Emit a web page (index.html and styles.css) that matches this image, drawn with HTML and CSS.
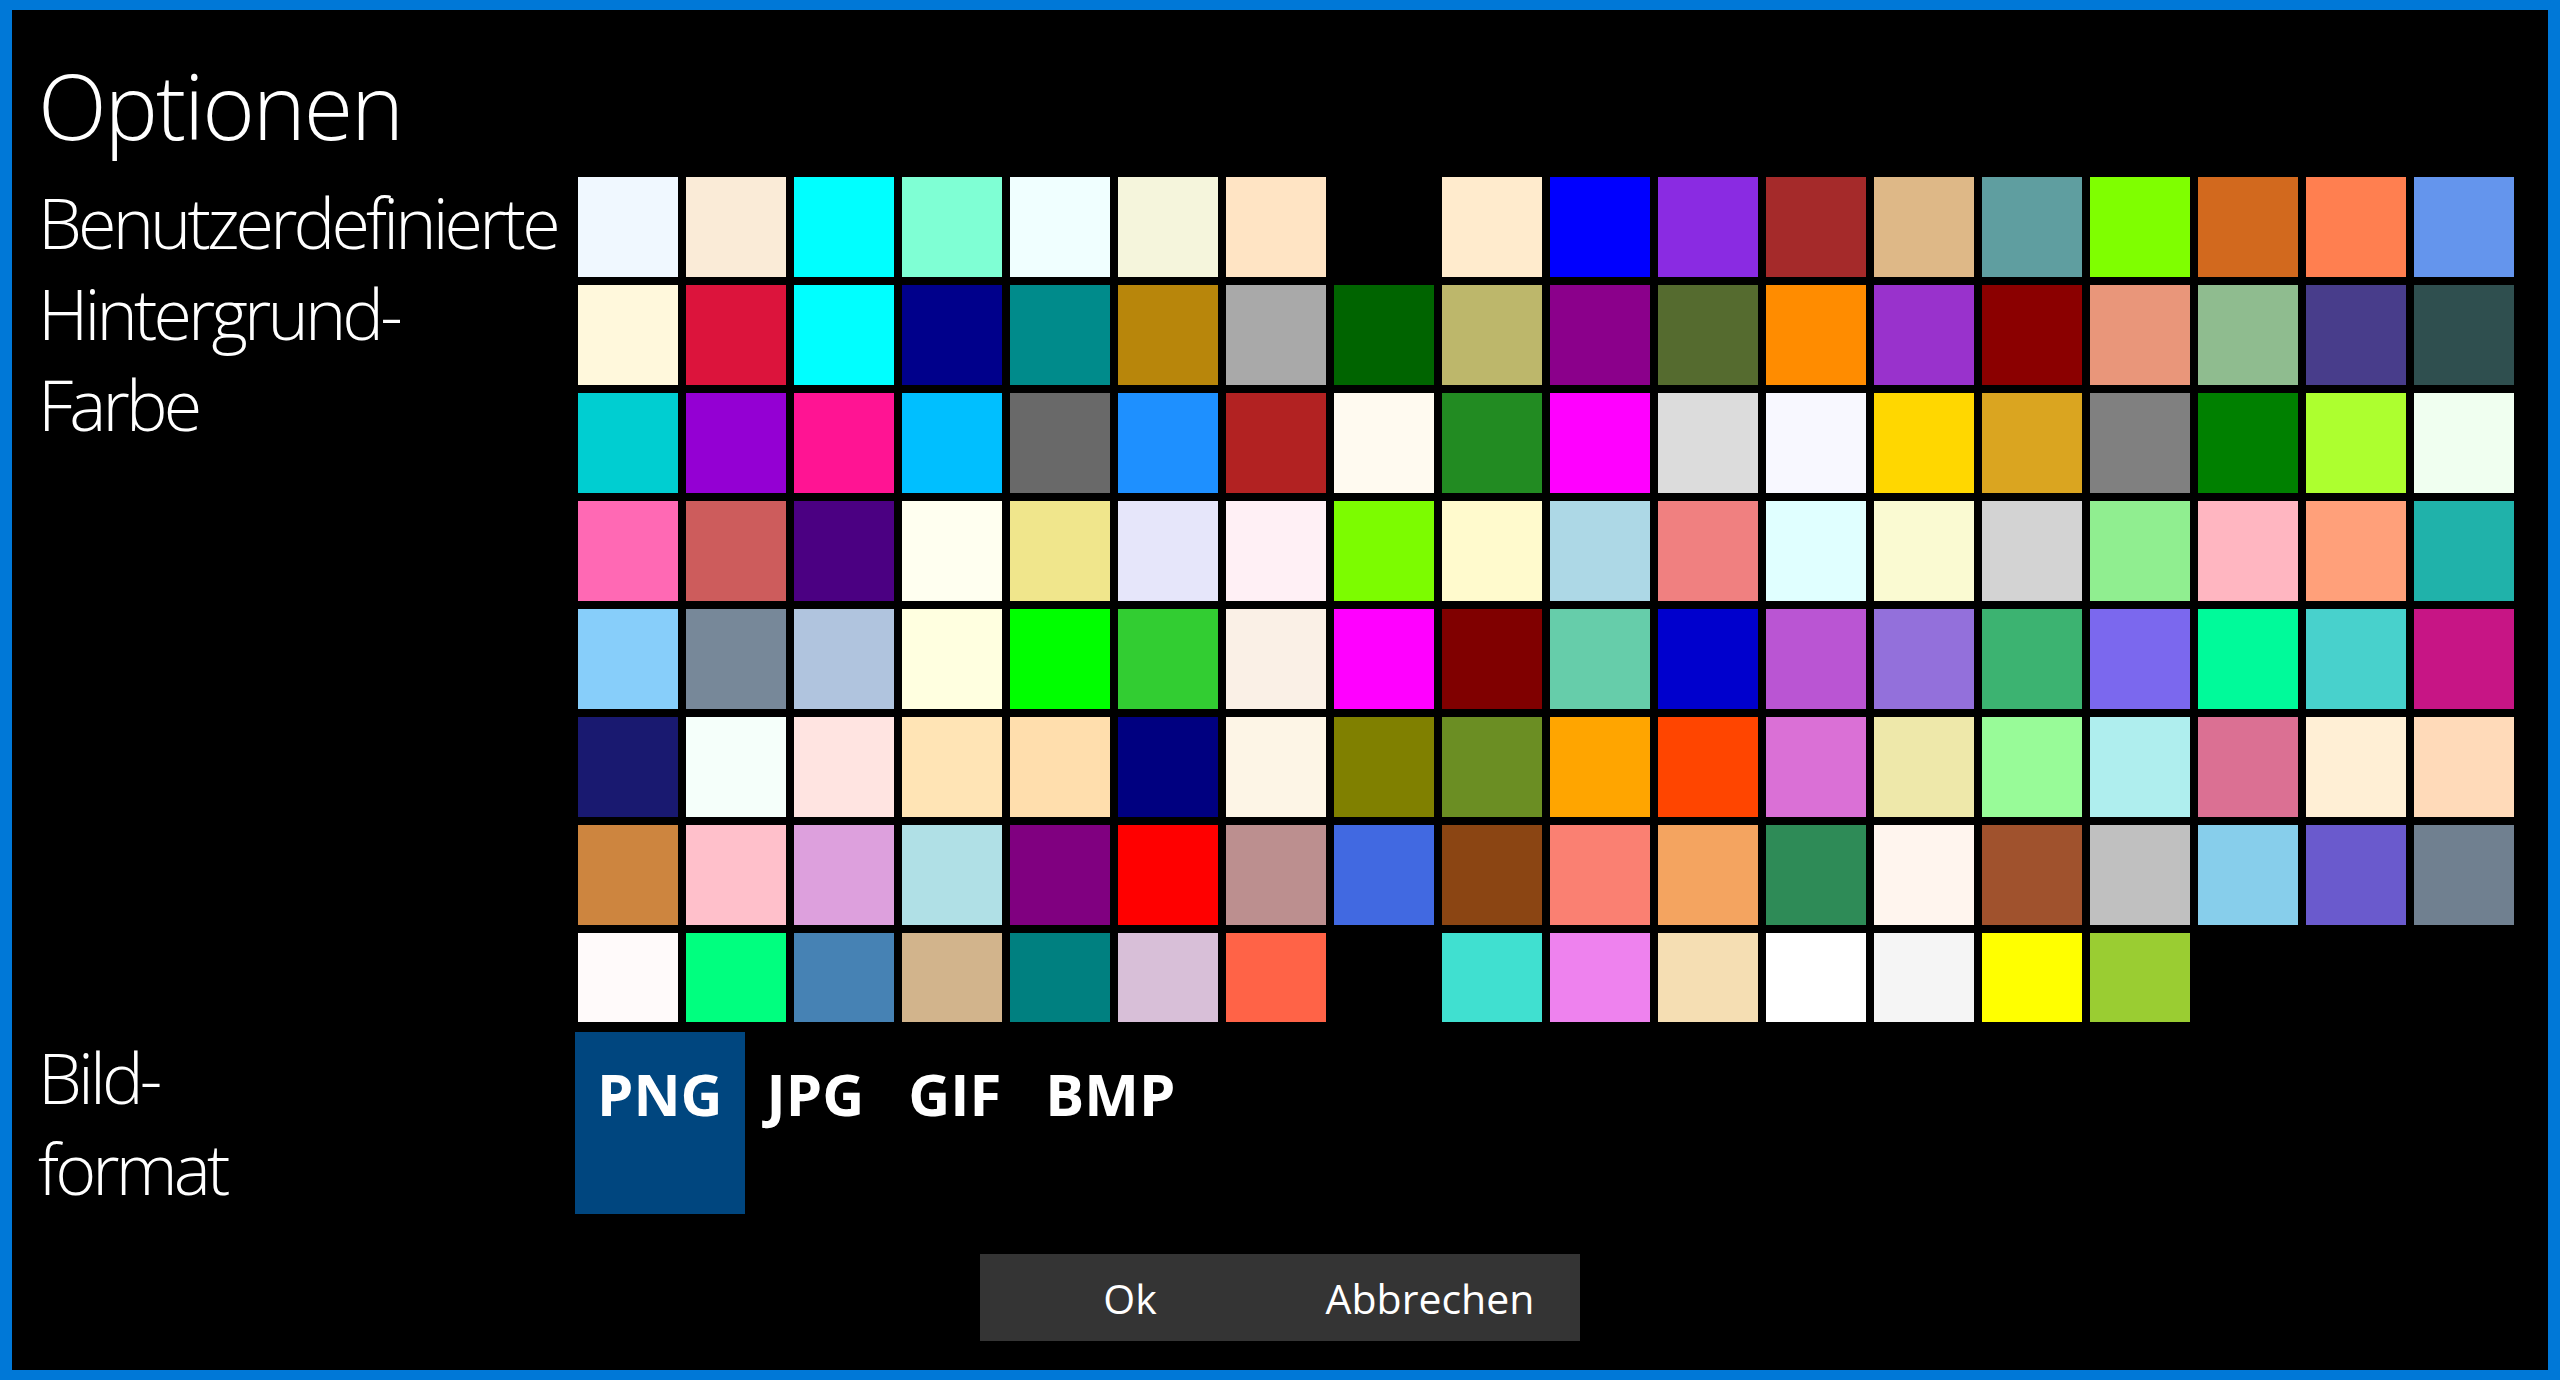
FILE: index.html
```html
<!DOCTYPE html>
<html lang="de">
<head>
  <meta charset="UTF-8" />
  <title>Optionen</title>
  <link rel="stylesheet" href="styles.css">
</head>
<body>
  <div class="window">
    <h1 class="title">Optionen</h1>

    <div class="row">
      <div class="label">Benutzerdefinierte<br>Hintergrund-<br>Farbe</div>
      <div class="swatches">
        <div class="swatch" style="background:aliceblue"></div>
        <div class="swatch" style="background:antiquewhite"></div>
        <div class="swatch" style="background:aqua"></div>
        <div class="swatch" style="background:aquamarine"></div>
        <div class="swatch" style="background:azure"></div>
        <div class="swatch" style="background:beige"></div>
        <div class="swatch" style="background:bisque"></div>
        <div class="swatch" style="background:black"></div>
        <div class="swatch" style="background:blanchedalmond"></div>
        <div class="swatch" style="background:blue"></div>
        <div class="swatch" style="background:blueviolet"></div>
        <div class="swatch" style="background:brown"></div>
        <div class="swatch" style="background:burlywood"></div>
        <div class="swatch" style="background:cadetblue"></div>
        <div class="swatch" style="background:chartreuse"></div>
        <div class="swatch" style="background:chocolate"></div>
        <div class="swatch" style="background:coral"></div>
        <div class="swatch" style="background:cornflowerblue"></div>

        <div class="swatch" style="background:cornsilk"></div>
        <div class="swatch" style="background:crimson"></div>
        <div class="swatch" style="background:cyan"></div>
        <div class="swatch" style="background:darkblue"></div>
        <div class="swatch" style="background:darkcyan"></div>
        <div class="swatch" style="background:darkgoldenrod"></div>
        <div class="swatch" style="background:darkgray"></div>
        <div class="swatch" style="background:darkgreen"></div>
        <div class="swatch" style="background:darkkhaki"></div>
        <div class="swatch" style="background:darkmagenta"></div>
        <div class="swatch" style="background:darkolivegreen"></div>
        <div class="swatch" style="background:darkorange"></div>
        <div class="swatch" style="background:darkorchid"></div>
        <div class="swatch" style="background:darkred"></div>
        <div class="swatch" style="background:darksalmon"></div>
        <div class="swatch" style="background:darkseagreen"></div>
        <div class="swatch" style="background:darkslateblue"></div>
        <div class="swatch" style="background:darkslategray"></div>

        <div class="swatch" style="background:darkturquoise"></div>
        <div class="swatch" style="background:darkviolet"></div>
        <div class="swatch" style="background:deeppink"></div>
        <div class="swatch" style="background:deepskyblue"></div>
        <div class="swatch" style="background:dimgray"></div>
        <div class="swatch" style="background:dodgerblue"></div>
        <div class="swatch" style="background:firebrick"></div>
        <div class="swatch" style="background:floralwhite"></div>
        <div class="swatch" style="background:forestgreen"></div>
        <div class="swatch" style="background:fuchsia"></div>
        <div class="swatch" style="background:gainsboro"></div>
        <div class="swatch" style="background:ghostwhite"></div>
        <div class="swatch" style="background:gold"></div>
        <div class="swatch" style="background:goldenrod"></div>
        <div class="swatch" style="background:gray"></div>
        <div class="swatch" style="background:green"></div>
        <div class="swatch" style="background:greenyellow"></div>
        <div class="swatch" style="background:honeydew"></div>

        <div class="swatch" style="background:hotpink"></div>
        <div class="swatch" style="background:indianred"></div>
        <div class="swatch" style="background:indigo"></div>
        <div class="swatch" style="background:ivory"></div>
        <div class="swatch" style="background:khaki"></div>
        <div class="swatch" style="background:lavender"></div>
        <div class="swatch" style="background:lavenderblush"></div>
        <div class="swatch" style="background:lawngreen"></div>
        <div class="swatch" style="background:lemonchiffon"></div>
        <div class="swatch" style="background:lightblue"></div>
        <div class="swatch" style="background:lightcoral"></div>
        <div class="swatch" style="background:lightcyan"></div>
        <div class="swatch" style="background:lightgoldenrodyellow"></div>
        <div class="swatch" style="background:lightgray"></div>
        <div class="swatch" style="background:lightgreen"></div>
        <div class="swatch" style="background:lightpink"></div>
        <div class="swatch" style="background:lightsalmon"></div>
        <div class="swatch" style="background:lightseagreen"></div>

        <div class="swatch" style="background:lightskyblue"></div>
        <div class="swatch" style="background:lightslategray"></div>
        <div class="swatch" style="background:lightsteelblue"></div>
        <div class="swatch" style="background:lightyellow"></div>
        <div class="swatch" style="background:lime"></div>
        <div class="swatch" style="background:limegreen"></div>
        <div class="swatch" style="background:linen"></div>
        <div class="swatch" style="background:magenta"></div>
        <div class="swatch" style="background:maroon"></div>
        <div class="swatch" style="background:mediumaquamarine"></div>
        <div class="swatch" style="background:mediumblue"></div>
        <div class="swatch" style="background:mediumorchid"></div>
        <div class="swatch" style="background:mediumpurple"></div>
        <div class="swatch" style="background:mediumseagreen"></div>
        <div class="swatch" style="background:mediumslateblue"></div>
        <div class="swatch" style="background:mediumspringgreen"></div>
        <div class="swatch" style="background:mediumturquoise"></div>
        <div class="swatch" style="background:mediumvioletred"></div>

        <div class="swatch" style="background:midnightblue"></div>
        <div class="swatch" style="background:mintcream"></div>
        <div class="swatch" style="background:mistyrose"></div>
        <div class="swatch" style="background:moccasin"></div>
        <div class="swatch" style="background:navajowhite"></div>
        <div class="swatch" style="background:navy"></div>
        <div class="swatch" style="background:oldlace"></div>
        <div class="swatch" style="background:olive"></div>
        <div class="swatch" style="background:olivedrab"></div>
        <div class="swatch" style="background:orange"></div>
        <div class="swatch" style="background:orangered"></div>
        <div class="swatch" style="background:orchid"></div>
        <div class="swatch" style="background:palegoldenrod"></div>
        <div class="swatch" style="background:palegreen"></div>
        <div class="swatch" style="background:paleturquoise"></div>
        <div class="swatch" style="background:palevioletred"></div>
        <div class="swatch" style="background:papayawhip"></div>
        <div class="swatch" style="background:peachpuff"></div>

        <div class="swatch" style="background:peru"></div>
        <div class="swatch" style="background:pink"></div>
        <div class="swatch" style="background:plum"></div>
        <div class="swatch" style="background:powderblue"></div>
        <div class="swatch" style="background:purple"></div>
        <div class="swatch" style="background:red"></div>
        <div class="swatch" style="background:rosybrown"></div>
        <div class="swatch" style="background:royalblue"></div>
        <div class="swatch" style="background:saddlebrown"></div>
        <div class="swatch" style="background:salmon"></div>
        <div class="swatch" style="background:sandybrown"></div>
        <div class="swatch" style="background:seagreen"></div>
        <div class="swatch" style="background:seashell"></div>
        <div class="swatch" style="background:sienna"></div>
        <div class="swatch" style="background:silver"></div>
        <div class="swatch" style="background:skyblue"></div>
        <div class="swatch" style="background:slateblue"></div>
        <div class="swatch" style="background:slategray"></div>

        <div class="swatch" style="background:snow"></div>
        <div class="swatch" style="background:springgreen"></div>
        <div class="swatch" style="background:steelblue"></div>
        <div class="swatch" style="background:tan"></div>
        <div class="swatch" style="background:teal"></div>
        <div class="swatch" style="background:thistle"></div>
        <div class="swatch" style="background:tomato"></div>
        <div class="swatch" style="background:transparent"></div>
        <div class="swatch" style="background:turquoise"></div>
        <div class="swatch" style="background:violet"></div>
        <div class="swatch" style="background:wheat"></div>
        <div class="swatch" style="background:white"></div>
        <div class="swatch" style="background:whitesmoke"></div>
        <div class="swatch" style="background:yellow"></div>
        <div class="swatch" style="background:yellowgreen"></div>
      </div>
    </div>

    <div class="row formatRow">
      <div class="label">Bild-<br>format</div>
      <div class="formats">
        <div class="format selected">PNG</div>
        <div class="format">JPG</div>
        <div class="format">GIF</div>
        <div class="format">BMP</div>
      </div>
    </div>

    <div class="actions">
      <button>Ok</button>
      <button>Abbrechen</button>
    </div>
  </div>
</body>
</html>
```

FILE: styles.css
```css
html, body {
  margin: 0;
  height: 100%;
  background-color: #000;
}

body {
  font-family: "Open Sans", "Noto Sans", sans-serif;
  color: #fff;
}

.window {
  box-sizing: border-box;
  height: 100vh;
  border-style: solid;
  border-color: #0078d7;
  border-width: 10px 12px 10px 12px;
  padding-left: 26px;
  display: flex;
  flex-direction: column;
}

.title {
  margin: 50px 0 27px 0;
  font-size: 90px;
  line-height: 90px;
  font-weight: 300;
  letter-spacing: -0.024em;
}

.row {
  display: flex;
}

.label {
  flex: none;
  width: 537px;
  font-size: 70px;
  line-height: 91px;
  font-weight: 300;
  letter-spacing: -0.055em;
}

.swatches {
  margin-left: 3px;
  height: 845px;
  overflow: hidden;
  display: grid;
  grid-template-columns: repeat(18, 100px);
  grid-auto-rows: 100px;
  gap: 8px;
}

.formatRow {
  margin-top: 10px;
}

.formats {
  display: flex;
}

.format {
  padding: 33px 22px 90px 22px;
  font-size: 58px;
  line-height: 58px;
  font-weight: 700;
}

.format.selected {
  background-color: #00467f;
}

.actions {
  margin-top: 40px;
  display: flex;
  justify-content: center;
  /* undo the window's left padding so the buttons sit on the real centre */
  margin-left: -26px;
}

.actions button {
  width: 300px;
  height: 87px;
  border: none;
  margin: 0;
  padding: 0;
  background-color: #343434;
  color: #fff;
  font-family: "Open Sans", "Noto Sans", sans-serif;
  font-size: 41px;
}

.actions button:hover {
  cursor: pointer;
}
```
